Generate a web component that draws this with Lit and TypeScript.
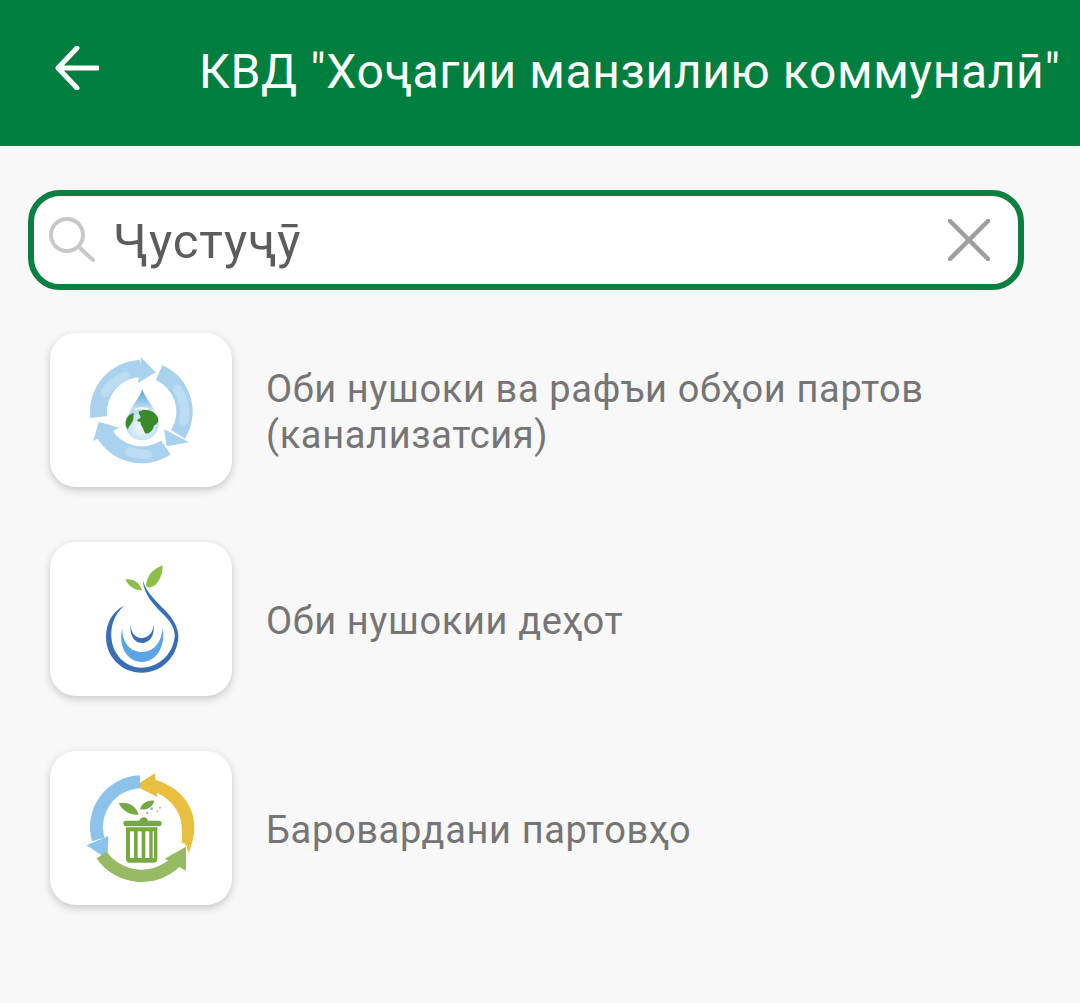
import { LitElement, html, css, svg } from "lit";
import { customElement } from "lit/decorators.js";

const pol = (cx: number, cy: number, r: number, a: number) => {
  const t = (a * Math.PI) / 180;
  return `${(cx + r * Math.sin(t)).toFixed(1)} ${(cy - r * Math.cos(t)).toFixed(1)}`;
};
// ring segment; angles clockwise from 12 o'clock, a1 < a2
const band = (cx: number, cy: number, ro: number, ri: number, a1: number, a2: number) => {
  const large = a2 - a1 > 180 ? 1 : 0;
  return `M${pol(cx, cy, ro, a1)}A${ro} ${ro} 0 ${large} 1 ${pol(cx, cy, ro, a2)}L${pol(cx, cy, ri, a2)}A${ri} ${ri} 0 ${large} 0 ${pol(cx, cy, ri, a1)}Z`;
};

const icon1 = svg`
  <svg viewBox="30 22 546 462" class="ic">
    <defs>
      <linearGradient id="dr" x1="0" y1="0" x2="0" y2="1"><stop offset="0" stop-color="#4f9fd8"/><stop offset="1" stop-color="#d5e9f6"/></linearGradient>
      <radialGradient id="gl" cx=".5" cy=".6" r=".6"><stop offset="0" stop-color="#f4fafd"/><stop offset="1" stop-color="#b4d8ef"/></radialGradient>
    </defs>
    <g fill="#a9d2ee">
      <path d=${band(305, 258, 155, 104, 263, 358)}/>
      <path d="M303 95L347 140L294 172Z"/>
      <path d=${band(305, 258, 153, 104, 24, 122)}/>
      <path d="M372 310L447 350L380 362Z"/>
      <path d=${band(305, 258, 155, 104, 146, 240)}/>
      <path d="M176 288L160 346L238 306Z"/>
    </g>
    <g fill="none" stroke="#bcdcf2" stroke-width="28" stroke-linecap="round">
      <path d="M195 200A130 130 0 0 1 255 152"/>
      <path d="M412 190A130 130 0 0 1 432 285"/>
      <path d="M268 378A130 130 0 0 0 322 386"/>
    </g>
    <path d="M307 190C313 215 335 232 345 258L268 258C280 232 300 215 307 190Z" fill="url(#dr)"/>
    <circle cx="306" cy="294" r="50" fill="url(#gl)"/>
    <path d="M296 258C312 248 340 252 352 272C358 285 355 292 345 298C338 302 342 312 332 318C322 327 315 325 312 316C310 305 300 300 302 288C290 290 288 282 300 278C306 274 296 268 296 258Z" fill="#3a8a2a"/>
    <path d="M257 290C260 272 270 264 282 262C278 272 284 280 276 290C272 300 266 300 264 312C259 306 256 298 257 290Z" fill="#3a8a2a"/>
    <path d="M285 252Q300 244 325 250" fill="none" stroke="#fff" stroke-width="5"/>
  </svg>`;

const icon2 = svg`
  <svg viewBox="30 20 546 462" class="ic">
    <path d="M318 152C320 120 340 100 368 90C368 120 355 150 332 156C326 157 321 155 318 152Z" fill="#8cc04a"/>
    <path d="M256 133C275 128 298 138 306 165C285 165 268 155 256 133Z" fill="#8cc04a"/>
    <path d="M308 135C322 178 350 198 378 228C400 252 416 278 415 305C412 365 365 412 305 412C245 412 198 365 198 305C198 265 215 230 252 211C225 235 212 268 214 305C217 358 258 398 305 397C355 396 398 358 404 305C406 280 392 258 368 235C340 208 312 178 308 135Z" fill="#3a6eb4"/>
    <path d="M272 266C272 292 285 308 305 308C325 308 340 292 341 266C345 300 330 323 305 323C282 323 268 298 272 266Z" fill="#3a6eb4"/>
    <path d="M247 278C245 322 272 350 305 350C340 350 365 322 368 278C378 335 348 380 305 380C265 380 232 335 247 278Z" fill="#5ba6e2"/>
  </svg>`;

const icon3 = svg`
  <svg viewBox="30 17 546 462" class="ic">
    <path d="M345 103C420 125 463 180 463 245C463 275 455 300 445 325C442 300 432 285 424 296C428 280 425 262 425 245C425 205 395 160 345 140Z" fill="#e8bf3f"/>
    <path d="M286 121L345 84L352 155Z" fill="#e8bf3f"/>
    <path d=${band(305, 245, 155, 116, 254, 358)} fill="#8cc3ea"/>
    <path d="M140 300L205 272L202 342Z" fill="#8cc3ea"/>
    <path d=${band(305, 245, 165, 128, 136, 235)} fill="#96bb63"/>
    <path d="M374 340L438 304L438 376Z" fill="#96bb63"/>
    <path d="M250 232Q250 226 258 226H298Q302 214 315 216Q322 218 324 226H356Q365 226 365 234Q365 243 356 243H258Q250 243 250 232Z" fill="#76a843"/>
    <path d="M258 246H352V340Q352 352 340 352H270Q258 352 258 340Z" fill="#76a843"/>
    <g fill="#fff"><rect x="270" y="258" width="12" height="80"/><rect x="293" y="258" width="12" height="80"/><rect x="316" y="258" width="12" height="80"/><rect x="338" y="258" width="4" height="80"/></g>
    <path d="M236 174C262 168 288 180 296 208C270 210 248 198 236 174Z" fill="#76a843"/>
    <path d="M300 192C306 172 322 164 343 166C338 186 320 196 300 192Z" fill="#76a843"/>
    <circle cx="335" cy="190" r="4" fill="#7db4e0"/><circle cx="352" cy="197" r="3" fill="#e8bf3f"/><circle cx="360" cy="187" r="2.5" fill="#7db4e0"/><circle cx="322" cy="203" r="3.5" fill="#96bb63"/>
  </svg>`;

const items = [
  { icon: icon1, text: html`Оби нушоки ва рафъи обҳои партов<br />(канализатсия)` },
  { icon: icon2, text: html`Оби нушокии деҳот` },
  { icon: icon3, text: html`Баровардани партовҳо` },
];

@customElement("app-root")
export class AppRoot extends LitElement {
  static styles = css`
    :host { display: block; min-height: 1003px; background: #f8f8f8; font-family: Roboto, "Noto Sans", sans-serif; overflow: hidden; }
    .bar { height: 146px; background: #017f3e; display: flex; align-items: center; color: #fff; }
    .back { width: 199px; flex: none; display: flex; padding-left: 55px; box-sizing: border-box; margin-top: -10px; }
    .title { font-size: 48px; letter-spacing: 0.62px; white-space: nowrap; margin-top: -3px; line-height: 56px; }
    .search { margin: 44px 0 0 28px; width: 996px; height: 100px; box-sizing: border-box; border: 6px solid #0a7f41; border-radius: 32px; background: #fff; display: flex; align-items: center; padding: 0 28px 0 15px; }
    .search .q { font-size: 49px; letter-spacing: 0.9px; color: #5c5c5c; margin-left: 18px; flex: 1; line-height: 56px; padding-top: 3px; }
    .list { display: flex; flex-direction: column; gap: 55px; margin: 43px 0 0 50px; }
    .row { display: flex; align-items: center; gap: 35px; }
    .card { width: 182px; height: 154px; flex: none; background: #fff; border-radius: 26px; box-shadow: 0 3px 9px rgba(0,0,0,.2); }
    .ic { display: block; width: 182px; height: 154px; filter: blur(0.5px); }
    .txt { font-size: 38px; letter-spacing: 0.65px; line-height: 46px; color: #757575; padding-top: 3px; margin-left: -1px; }
  `;

  render() {
    return html`
      <div class="bar">
        <div class="back">
          <svg width="44" height="44" viewBox="0 0 44 44" fill="none" stroke="#fff" stroke-width="5" stroke-linecap="round" stroke-linejoin="round"><path d="M43 22H3M22 2L3 22L22 42" /></svg>
        </div>
        <div class="title">КВД "Хоҷагии манзилию коммуналӣ"</div>
      </div>
      <div class="search">
        <svg width="46" height="46" viewBox="0 0 46 46" fill="none" stroke="#c6c8ca" stroke-width="4" stroke-linecap="round"><circle cx="18" cy="18" r="16" /><path d="M30 30L44 43" /></svg>
        <div class="q">Ҷустуҷӯ</div>
        <svg width="42" height="42" viewBox="0 0 42 42" fill="none" stroke="#9e9e9e" stroke-width="4.5" stroke-linecap="round"><path d="M2 2L40 40M40 2L2 40" /></svg>
      </div>
      <div class="list">
        ${items.map((i) => html`<div class="row"><div class="card">${i.icon}</div><div class="txt">${i.text}</div></div>`)}
      </div>
    `;
  }
}
